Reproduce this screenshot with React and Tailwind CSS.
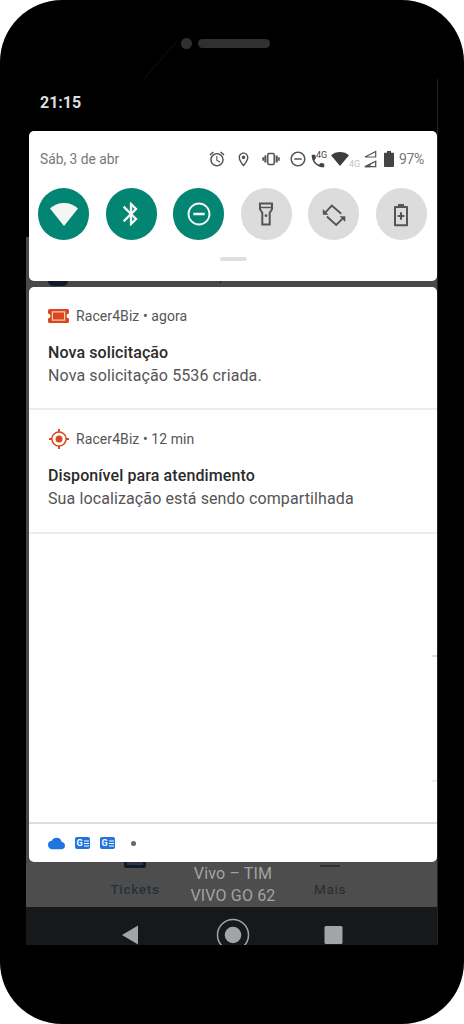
import {
  MdAlarm,
  MdBluetooth,
  MdCloud,
  MdOutlineLocationOn,
  MdRemoveCircleOutline,
} from "react-icons/md";

const WifiIcon = ({ className }) => (
  <svg viewBox="0 0 28 24" className={className} fill="currentColor" preserveAspectRatio="none">
    <path d="M14 24 0 5.700C3.600 2.100 8.500 0 14 0s10.400 2.100 14 5.700z" />
  </svg>
);

const VibrateIcon = () => (
  <svg viewBox="0 0 18 14" className="h-[14px] w-[18px]" fill="none" stroke="currentColor">
    <rect x="5.800" y="1.500" width="6.400" height="11" rx="1" strokeWidth="1.500" />
    <path d="M3.400 3.500v7M14.600 3.500v7" strokeWidth="2.100" />
    <path d="M1.300 5.200v3.600M16.700 5.200v3.600" strokeWidth="2" />
  </svg>
);

const CallIcon = () => (
  <svg viewBox="2 2 20 20" className="h-[14px] w-[14px]" fill="currentColor">
    <path d="M20 15.500c-1.250 0-2.450-.2-3.570-.57a1 1 0 0 0-1.020.24l-2.200 2.200a15.070 15.070 0 0 1-6.590-6.590l2.200-2.200c.28-.28.36-.67.250-1.020A11.360 11.360 0 0 1 8.500 4c0-.55-.45-1-1-1H4c-.55 0-1 .45-1 1 0 9.390 7.610 17 17 17 .55 0 1-.45 1-1v-3.500c0-.55-.45-1-1-1z" />
  </svg>
);

const SignalIcon = () => (
  <svg viewBox="0 0 14 18" className="h-[18px] w-[14px]" fill="none" stroke="currentColor">
    <path d="M2 7H12.700V1.500z" strokeWidth="1.200" />
    <path d="M2 16.700H12.700V11.200z" strokeWidth="1.300" />
    <path d="M1 17.200 7.500 13.500v3.700z" fill="currentColor" stroke="none" />
  </svg>
);

const BatteryIcon = () => (
  <svg viewBox="0 0 10 16" className="h-4 w-[10px]" fill="currentColor">
    <path d="M3 0h4v1.800h2.200q.8 0 .8.800v12.600q0 .8-.8.800H.8q-.8 0-.8-.8V2.600q0-.8.800-.8H3z" />
  </svg>
);

const DndIcon = () => (
  <svg viewBox="0 0 24 24" className="h-6 w-6" fill="none" stroke="currentColor">
    <circle cx="12" cy="12" r="10.500" strokeWidth="1.900" />
    <path d="M6.300 12h11.400" strokeWidth="2.600" />
  </svg>
);

const FlashlightIcon = () => (
  <svg viewBox="0 0 16 24" className="h-6 w-4" fill="none" stroke="currentColor" strokeWidth="2">
    <path d="M2 1.500h12v5.800l-2.300 3.500v11.700H4.300V10.800L2 7.300z" />
    <path d="M2 5.500h12" strokeWidth="1.600" />
    <circle cx="8" cy="13.700" r="1.400" fill="currentColor" stroke="none" />
  </svg>
);

const RotateIcon = () => (
  <svg viewBox="0 0 24 24" className="mt-[2px] h-6 w-6" fill="none" stroke="currentColor" strokeWidth="1.900">
    <path d="M3 9.800 9.800 2.600 19.200 10.700M4.900 13.500 14.200 22 21.300 14.800" />
    <path d="M.8 6v5.700h5.700zM23.300 18.900v-5.700h-5.700z" fill="currentColor" stroke="none" />
  </svg>
);

const SaverIcon = () => (
  <svg viewBox="0 0 16 24" className="mt-[2px] h-6 w-4" fill="none" stroke="currentColor">
    <path d="M2 4h12v18.300H2z" strokeWidth="2" strokeLinejoin="round" />
    <path d="M5 2.300h6" strokeWidth="2.800" />
    <path d="M8 9.300v7.400M4.600 13h6.800" strokeWidth="2" />
  </svg>
);

const TicketIcon = () => (
  <svg viewBox="0 0 21 14" className="h-[14px] w-[21px]">
    <path d="M1.500 0h18q1.500 0 1.500 1.500v3a2.500 2.500 0 0 0 0 5v3q0 1.500-1.500 1.500h-18Q0 14 0 12.500v-3a2.500 2.500 0 0 0 0-5v-3Q0 0 1.500 0z" fill="#d8481c" />
    <rect x="4.400" y="2.900" width="12.200" height="8.200" fill="none" stroke="#fbd9cc" strokeWidth="1.100" />
  </svg>
);

const TargetIcon = () => (
  <svg viewBox="0 0 20 20" className="h-5 w-5" fill="none" stroke="#d8481c">
    <circle cx="10" cy="10" r="7.100" strokeWidth="1.500" />
    <circle cx="10" cy="10" r="3.500" fill="#d8481c" stroke="none" />
    <path d="M10 0v3M10 17v3M0 10h3M17 10h3" strokeWidth="1.900" />
  </svg>
);

const NewsIcon = () => (
  <span className="flex h-3 w-[15px] items-center justify-center gap-px rounded-[2px] bg-[#1f74e0] text-white">
    <span className="text-[9px] leading-none font-bold">G</span>
    <svg viewBox="0 0 5 7" className="h-[7px] w-[5px]" stroke="currentColor">
      <path d="M0 1h5M0 3.500h5M0 6h5" strokeWidth="1.200" />
    </svg>
  </span>
);

const toggles = [
  { id: "wifi", on: true, icon: <WifiIcon className="mt-px h-[23px] w-7" /> },
  { id: "bluetooth", on: true, icon: <MdBluetooth className="h-7 w-7" /> },
  { id: "dnd", on: true, icon: <DndIcon /> },
  { id: "flashlight", on: false, icon: <FlashlightIcon /> },
  { id: "rotate", on: false, icon: <RotateIcon /> },
  { id: "saver", on: false, icon: <SaverIcon /> },
];

function StatusIcons() {
  return (
    <div className="flex h-5 items-center text-[#555]">
      <MdAlarm className="h-[18px] w-[18px]" />
      <MdOutlineLocationOn className="ml-[9px] h-[17px] w-[17px]" />
      <span className="ml-[10px]"><VibrateIcon /></span>
      <MdRemoveCircleOutline className="ml-[9px] h-[18px] w-[18px]" />
      <span className="relative mt-[3px] ml-[4px] h-[14px] w-[15px] text-[#444]">
        <CallIcon />
        <span className="absolute -top-[3px] left-[5px] text-[9px] leading-none">4G</span>
      </span>
      <WifiIcon className="ml-[5px] h-[14px] w-[18px] text-[#3d3d3d]" />
      <span className="mt-[10px] w-[13px] text-[9px] leading-none text-[#c4c4c4]">4G</span>
      <span className="ml-px"><SignalIcon /></span>
      <span className="ml-[7px] text-[#444]"><BatteryIcon /></span>
      <span className="ml-[5px] text-[14px] leading-5 tracking-[-0.3px] text-[#777]">97%</span>
    </div>
  );
}

function QuickSettings() {
  return (
    <div className="ml-[3px] h-[150px] w-[408px] rounded-[5px] bg-white pt-[18px]">
      <div className="flex justify-between pr-[13px] pl-[11px]">
        <span className="text-[13.800px] leading-5 text-[#777]">Sáb, 3 de abr</span>
        <StatusIcons />
      </div>
      <div className="mt-[19px] flex justify-between pr-[10px] pl-[9px]">
        {toggles.map((t) => (
          <div
            key={t.id}
            className={`flex h-[52px] w-[51px] items-center justify-center rounded-full ${
              t.on ? "bg-[#028573] text-[#f5f5f5]" : "bg-[#dcdcdc] text-[#555]"
            }`}
          >
            {t.icon}
          </div>
        ))}
      </div>
      <div className="mx-auto mt-[17px] h-1 w-[27px] rounded-full bg-[#dfdfdf]" />
    </div>
  );
}

function Notification({ icon, time, title, text, className }) {
  return (
    <div className={`border-b-2 border-[#ececec] pl-[19px] ${className}`}>
      <div className="flex h-5 items-center">
        <span className="flex w-[21px] justify-center">{icon}</span>
        <span className="ml-[7px] text-[14px] tracking-[0.080px] text-[#555]">Racer4Biz • {time}</span>
      </div>
      <p className="mt-[15px] text-[16px] leading-[23px] font-medium tracking-[0.100px] text-[#2b2b2b]">{title}</p>
      <p className="text-[16px] leading-[23px] tracking-[0.110px] text-[#555]">{text}</p>
    </div>
  );
}

export default function App() {
  return (
    <div className="h-[1024px] w-[464px] overflow-hidden rounded-[62px] bg-black pt-[38px] font-[Roboto,sans-serif]">
      {/* Camera and speaker */}
      <div className="relative flex h-[41px] items-start pl-[181px]">
        <span className="h-[11px] w-[11px] rounded-full bg-[#303030]" />
        <span className="mt-px ml-[6px] h-[9px] w-[72px] rounded-full bg-[#303030]" />
        <svg viewBox="0 0 34 41" className="absolute top-0 left-[144px] h-[41px] w-[34px]">
          <path d="M0 41 33 3" stroke="#121212" />
        </svg>
      </div>

      {/* Screen */}
      <div className="ml-[26px] h-[866px] w-[412px] overflow-hidden border-r border-[#222] bg-[linear-gradient(to_bottom,black_158px,#484848_158px)]">
        <div className="h-[52px] pt-[14px] pl-[14px] text-[16px] leading-5 font-bold text-[#dedede]">21:15</div>
        <QuickSettings />
        <div className="flex h-[6px] items-start">
          <span className="ml-[22px] h-[5px] w-5 rounded-b-full bg-[#101a2b]" />
          <span className="ml-[152px] h-[2px] w-px bg-[#222]" />
        </div>

        <div className="ml-[3px] flex h-[575px] w-[408px] flex-col rounded-[5px] bg-white">
          <Notification
            className="h-[123px] pt-[19px]"
            icon={<TicketIcon />}
            time="agora"
            title="Nova solicitação"
            text="Nova solicitação 5536 criada."
          />
          <Notification
            className="h-[124px] pt-[19px]"
            icon={<TargetIcon />}
            time="12 min"
            title="Disponível para atendimento"
            text="Sua localização está sendo compartilhada"
          />
          <div className="flex flex-1 flex-col items-end">
            <span className="mt-[121px] h-[2px] w-[5px] bg-[#dcdcdc]" />
            <span className="mt-[123px] h-[2px] w-[5px] bg-[#ebebeb]" />
          </div>
          <div className="flex h-[40px] items-center border-t-2 border-[#dedede] pl-[19px]">
            <MdCloud className="h-[17px] w-[17px] text-[#1f74e0]" />
            <span className="ml-[10px]"><NewsIcon /></span>
            <span className="ml-[10px]"><NewsIcon /></span>
            <span className="ml-[16px] h-[5px] w-[5px] rounded-full bg-[#666]" />
          </div>
        </div>

        {/* Dimmed app tabs behind the shade */}
        <div className="flex h-[45px] bg-[#4d4d4d]">
          <div className="ml-[74px] flex w-[70px] flex-col items-center">
            <span className="h-[6px] w-[22px] rounded-b-[2px] bg-[#101a2b] px-[3px]">
              <span className="block h-[3px] bg-[#2d3542]" />
            </span>
            <span className="mt-[13px] text-[13.500px] leading-4 font-medium tracking-[0.700px] text-[#27303a]">Tickets</span>
          </div>
          <div className="ml-[12px] w-[102px] pt-px text-center text-[16px] leading-[22px] tracking-[0.150px] text-[#a3a3a3]">
            <p>Vivo – TIM</p>
            <p>VIVO GO 62</p>
          </div>
          <div className="ml-[11px] flex w-[70px] flex-col items-center">
            <span className="mt-[3px] h-[2px] w-5 bg-[#303030]" />
            <span className="mt-[14px] text-[13.500px] leading-4 tracking-[0.700px] text-[#2b2b2b]">Mais</span>
          </div>
        </div>

        {/* Navigation bar */}
        <div className="h-[38px] bg-[#17181a]">
          <svg viewBox="0 0 412 38" className="h-[38px] w-[412px]" fill="#a3a4a6">
            <path d="M96 28 112 18.500v19z" />
            <circle cx="207" cy="28" r="15.500" fill="none" stroke="#a3a4a6" strokeWidth="1.500" />
            <circle cx="207" cy="28" r="8.300" />
            <rect x="298.500" y="19" width="18" height="18" rx="1.500" />
          </svg>
        </div>
      </div>
    </div>
  );
}
